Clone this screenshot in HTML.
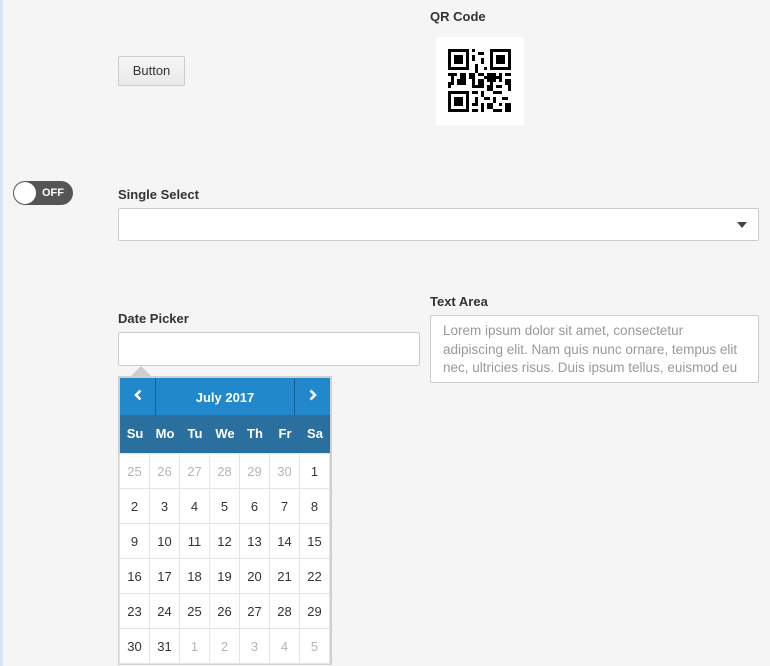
<!DOCTYPE html>
<html><head><meta charset="utf-8"><style>
*{box-sizing:border-box;margin:0;padding:0}
body{width:770px;height:666px;background:#f5f5f5;font-family:"Liberation Sans",sans-serif;color:#333;position:relative;overflow:hidden}
.abs{position:absolute}
.lbl{font-size:13px;font-weight:bold;color:#333}
.btn{left:118px;top:56px;width:67px;height:30px;border:1px solid #ccc;border-radius:2px;background:linear-gradient(#f6f6f6,#e9e9e9);font-size:13px;text-align:center;line-height:28px}
.inp{background:#fff;border:1px solid #ccc;border-radius:2px}
table{border-collapse:collapse}
td{width:30px;height:35px;text-align:center;font-size:13px;border:1px solid #e4e4e4;color:#333}
td.o{color:#b5b5b5}
</style></head><body>
<div class="abs" style="left:0;top:0;width:3px;height:666px;background:#d6e4f2"></div>
<div class="abs btn">Button</div>
<div class="abs lbl" style="left:430px;top:9px">QR Code</div>
<div class="abs" style="left:436px;top:37px;width:88px;height:88px;background:#fff"></div>
<svg class="abs" style="left:448px;top:49px" width="63" height="63" viewBox="0 0 21 21" shape-rendering="crispEdges">
<path fill="#000" d="M0 0h7v7H0zM14 0h7v7h-7zM0 14h7v7H0z"/>
<path fill="#fff" d="M1 1h5v5H1zM15 1h5v5h-5zM1 15h5v5H1z"/>
<path fill="#000" d="M2 2h3v3H2zM16 2h3v3h-3zM2 16h3v3H2z"/>
<path fill="#000" d="M8 0h1v1H8zM10 1h2v1h-2zM8 2h1v2H8zM11 3h1v2h-1zM9 5h1v3H9zM12 6h1v1h-1zM0 8h3v1H0zM4 8h2v2H4zM1 9h1v2H1zM7 8h2v2H7zM10 8h2v1h-2zM13 8h3v3h-3zM17 8h1v3h-1zM19 8h2v1h-2zM0 11h2v1H0zM3 10h3v2H3zM8 10h1v3H8zM10 10h2v2h-2zM14 11h1v1h-1zM19 10h2v2h-2zM0 12h1v1H0zM9 12h3v1H9zM13 12h2v2h-2zM16 12h2v1h-2zM20 12h1v2h-1zM8 14h2v1H8zM11 14h1v2h-1zM15 14h3v1h-3zM9 16h1v2H9zM12 16h2v1h-2zM15 16h1v2h-1zM18 16h2v1h-2zM8 18h2v1H8zM11 18h1v3h-1zM13 18h2v2h-2zM17 18h1v1h-1zM19 18h2v3h-2zM8 20h2v1H8zM15 20h3v1h-3zM12 9h1v1h-1zM16 9h1v1h-1z"/>
</svg>
<div class="abs" style="left:13px;top:181px;width:60px;height:24px;border-radius:12px;background:#555"></div>
<div class="abs" style="left:14px;top:182px;width:22px;height:22px;border-radius:11px;background:#fff"></div>
<div class="abs" style="left:42px;top:187px;font-size:11px;font-weight:bold;color:#fff">OFF</div>
<div class="abs lbl" style="left:118px;top:187px">Single Select</div>
<div class="abs inp" style="left:118px;top:208px;width:641px;height:33px"></div>
<div class="abs" style="left:737px;top:222px;width:0;height:0;border-left:5px solid transparent;border-right:5px solid transparent;border-top:6px solid #444"></div>
<div class="abs lbl" style="left:430px;top:294px">Text Area</div>
<div class="abs inp" style="left:430px;top:315px;width:329px;height:68px;padding:6px 12px;font-size:13.5px;line-height:18.5px;color:#999;white-space:nowrap;overflow:hidden">Lorem ipsum dolor sit amet, consectetur<br>adipiscing elit. Nam quis nunc ornare, tempus elit<br>nec, ultricies risus. Duis ipsum tellus, euismod eu</div>
<div class="abs lbl" style="left:118px;top:311px">Date Picker</div>
<div class="abs inp" style="left:118px;top:332px;width:302px;height:34px"></div>
<div class="abs" style="left:131px;top:366px;width:0;height:0;border-left:10px solid transparent;border-right:10px solid transparent;border-bottom:10px solid #ccc"></div>
<div class="abs" style="left:118px;top:376px;width:214px;height:289px;border:2px solid #d0d0d0;background:#fff">
 <div style="height:37px;background:#2288cc;position:relative;color:#fff">
  <div class="abs" style="left:35px;top:0;width:1px;height:37px;background:#1a5f8c"></div>
  <div class="abs" style="left:174px;top:0;width:1px;height:37px;background:#1a5f8c"></div>
  <svg class="abs" style="left:14px;top:11px" width="8" height="12" viewBox="0 0 8 12"><path d="M6.5 1.5L2 6l4.5 4.5" fill="none" stroke="#fff" stroke-width="2.6"/></svg>
  <svg class="abs" style="left:189px;top:11px" width="8" height="12" viewBox="0 0 8 12"><path d="M1.5 1.5L6 6l-4.5 4.5" fill="none" stroke="#fff" stroke-width="2.6"/></svg>
  <div class="abs" style="left:0;width:210px;top:12px;text-align:center;font-size:13px;font-weight:bold">July 2017</div>
 </div>
 <div style="height:38px;background:#2b6f9e;display:flex;color:#fff;font-size:13px;font-weight:bold">
  <span style="width:30px;text-align:center;line-height:38px">Su</span><span style="width:30px;text-align:center;line-height:38px">Mo</span><span style="width:30px;text-align:center;line-height:38px">Tu</span><span style="width:30px;text-align:center;line-height:38px">We</span><span style="width:30px;text-align:center;line-height:38px">Th</span><span style="width:30px;text-align:center;line-height:38px">Fr</span><span style="width:30px;text-align:center;line-height:38px">Sa</span>
 </div>
 <table style="margin-left:-1px">
 <tr><td class="o">25</td><td class="o">26</td><td class="o">27</td><td class="o">28</td><td class="o">29</td><td class="o">30</td><td>1</td></tr>
 <tr><td>2</td><td>3</td><td>4</td><td>5</td><td>6</td><td>7</td><td>8</td></tr>
 <tr><td>9</td><td>10</td><td>11</td><td>12</td><td>13</td><td>14</td><td>15</td></tr>
 <tr><td>16</td><td>17</td><td>18</td><td>19</td><td>20</td><td>21</td><td>22</td></tr>
 <tr><td>23</td><td>24</td><td>25</td><td>26</td><td>27</td><td>28</td><td>29</td></tr>
 <tr><td>30</td><td>31</td><td class="o">1</td><td class="o">2</td><td class="o">3</td><td class="o">4</td><td class="o">5</td></tr>
 </table>
</div>
</body></html>
